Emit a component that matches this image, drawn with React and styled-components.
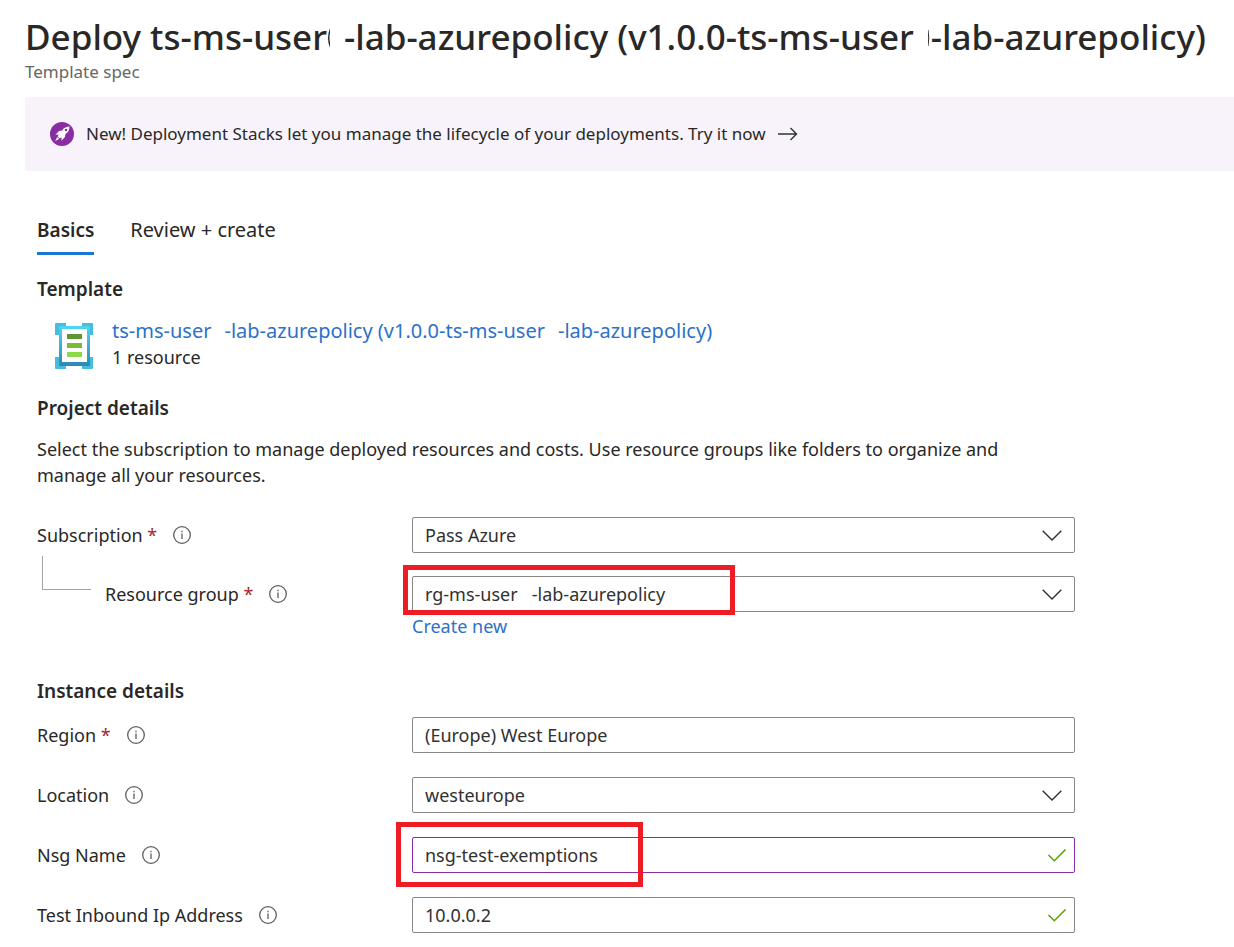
import React from 'react';
import styled, { createGlobalStyle, css } from 'styled-components';

const GlobalStyle = createGlobalStyle`
  *, *::before, *::after { box-sizing: border-box; }
  body {
    margin: 0;
    background: #fff;
    color: #292827;
    font: 400 18px/26px "Noto Sans", "Open Sans", sans-serif;
  }
`;

const Page = styled.div`
  padding: 12px 0 14px 25px;
`;

const Title = styled.h1`
  margin: 0;
  font-size: 35px;
  line-height: 50px;
  font-weight: 500;
  white-space: nowrap;
`;

const Subtitle = styled.p`
  margin: 0;
  font-size: 17px;
  line-height: 20px;
  color: #666;
`;

const Gap = styled.span`
  display: inline-block;
  width: ${(p) => p.$width}px;
`;

const Sliver = styled.svg`
  width: 3px;
  height: 24px;
`;

const Banner = styled.a`
  display: flex;
  align-items: center;
  gap: 12px;
  height: 74px;
  margin-top: 15px;
  padding: 0 25px;
  border-radius: 3px 0 0 3px;
  background: #f8f3fb;
  color: inherit;
  font-size: 17px;
  text-decoration: none;
`;

const Icon = styled.svg`
  display: block;
  flex: none;
  width: ${(p) => p.$w}px;
  height: ${(p) => p.$h || p.$w}px;
`;

const Content = styled.main`
  width: 87%;
  padding: 46px 0 0 12px;
`;

const Tabs = styled.div`
  display: flex;
  gap: 36px;
`;

const Tab = styled.button`
  height: 38px;
  padding: 0 0 9px;
  border: 0;
  border-bottom: 3px solid ${(p) => (p.$active ? '#1976d2' : 'transparent')};
  background: none;
  color: inherit;
  font: inherit;
  font-size: ${(p) => (p.$active ? 19 : 20)}px;
  font-weight: ${(p) => (p.$active ? 600 : 400)};
`;

const Heading = styled.h2`
  margin: 0;
  font-size: 19px;
  line-height: 26px;
  font-weight: 600;
`;

const TemplateRow = styled.div`
  display: flex;
  gap: 19px;
  margin-top: 16px;
  padding-left: 18px;
  white-space: nowrap;
`;

const TemplateIcon = styled(Icon)`
  margin-top: 5px;
`;

const Link = styled.a`
  color: #2b72c9;
  text-decoration: none;
`;

const TemplateLink = styled(Link)`
  font-size: 20px;
`;

const CreateLink = styled(Link)`
  display: block;
  width: max-content;
  padding-top: 1px;
`;

const Section = styled.section`
  margin-top: ${(p) => p.$top}px;
`;

const Description = styled.p`
  margin: 15px 0 0;
`;

const Fields = styled.div`
  display: flex;
  flex-direction: column;
  gap: ${(p) => p.$gap}px;
  margin-top: ${(p) => p.$top}px;
`;

const Row = styled.div`
  display: grid;
  grid-template-columns: 375px minmax(0, 663px);
`;

const LabelCell = styled.div`
  position: relative;
  display: flex;
  align-items: center;
  gap: 16px;
  height: 36px;
  padding-left: ${(p) => (p.$nested ? 68 : 0)}px;
`;

const Branch = styled.span`
  position: absolute;
  left: 5px;
  top: -20px;
  width: 49px;
  height: 34px;
  border: solid #a3a3a3;
  border-width: 0 0 1px 1px;
`;

const Star = styled.span`
  color: #a4262c;
`;

const InfoButton = styled.button`
  padding: 0;
  border: 0;
  background: none;
`;

const Control = styled.div`
  position: relative;
`;

const box = css`
  display: block;
  width: 100%;
  height: 36px;
  padding: 0 48px 0 12px;
  border: 1px solid ${(p) => (p.$edited ? '#8a2da5' : '#8a8886')};
  border-radius: 2px;
  background: #fff;
  color: #323130;
  font: inherit;
  line-height: 34px;
  outline: 0;
  appearance: none;
`;

const Input = styled.input`${box}`;
const Select = styled.select`${box}`;

const Adornment = styled.span`
  position: absolute;
  top: 8px;
  right: ${(p) => (p.$valid ? 8 : 13)}px;
  pointer-events: none;
`;

const Marker = styled.span`
  position: absolute;
  top: ${(p) => p.$top}px;
  left: ${(p) => p.$left}px;
  width: ${(p) => p.$width}px;
  height: ${(p) => p.$height}px;
  border: 5px solid #ee1c25;
  pointer-events: none;
`;

const InfoIcon = () => (
  <Icon $w={18} viewBox="0 0 18 18" fill="none" stroke="#605e5c" aria-hidden="true">
    <circle cx="9" cy="9" r="8.3" strokeWidth="1.3" />
    <path d="M9 7.5v5.5M9 4.8v1.4" strokeWidth="1.3" />
  </Icon>
);

const Chevron = () => (
  <Icon $w={20} viewBox="0 0 20 20" fill="none" stroke="#323130" strokeWidth="1.4" aria-hidden="true">
    <path d="M.7 5.7 10 15l9.3-9.3" />
  </Icon>
);

const Check = () => (
  <Icon $w={20} viewBox="0 0 20 20" fill="none" stroke="#57a300" strokeWidth="1.5" aria-hidden="true">
    <path d="m1.5 10 5.8 5.8L18.5 4.5" />
  </Icon>
);

function Field({ id, label, value, required, nested, select, valid, edited, marker, children }) {
  return (
    <Row>
      <LabelCell $nested={nested}>
        {nested && <Branch />}
        <label htmlFor={id}>
          {label}
          {required && <Star> *</Star>}
        </label>
        <InfoButton type="button" aria-label={`About ${label}`}>
          <InfoIcon />
        </InfoButton>
      </LabelCell>
      <Control>
        {select ? (
          <Select id={id} defaultValue={value}>
            <option>{value}</option>
          </Select>
        ) : (
          <Input id={id} defaultValue={value} $edited={edited} />
        )}
        {(select || valid) && (
          <Adornment $valid={valid}>{select ? <Chevron /> : <Check />}</Adornment>
        )}
        {children}
        {marker && <Marker {...marker} />}
      </Control>
    </Row>
  );
}

export default function App() {
  return (
    <>
      <GlobalStyle />
      <Page>
        <header>
          <Title>
            Deploy ts-ms-user
            <Sliver viewBox="0 0 3 24" aria-hidden="true">
              <path d="M3.5 3Q0 12 3.5 21" fill="none" stroke="#292827" strokeWidth="1.5" />
            </Sliver>
            <Gap $width={14} />
            -lab-azurepolicy (v1.0.0-ts-ms-user
            <Gap $width={14} />
            <Sliver viewBox="0 0 3 24" aria-hidden="true">
              <path d="M0 4Q1.5 12 0 20" fill="none" stroke="#292827" strokeWidth="1" />
            </Sliver>
            -lab-azurepolicy)
          </Title>
          <Subtitle>Template spec</Subtitle>
        </header>

        <Banner href="#stacks">
          <Icon $w={24} viewBox="0 0 24 24" aria-hidden="true">
            <circle cx="12" cy="12" r="12" fill="#8a2da5" />
            <path
              d="M19.5 4.5c-3.2 0-5.4 1-7.3 4l-3.2.5-3.6 3.8 3.2-.4-.8 2.2 1.7 1.7 2.2-.8-.4 3.3 3.5-3.5.7-3.3c3-2 4-4.2 4-7.5z"
              fill="#fff"
            />
            <circle cx="16" cy="8" r="1.3" fill="#8a2da5" />
            <path d="m7.2 15-2 4 4-2z" fill="#fff" />
          </Icon>
          <span>New! Deployment Stacks let you manage the lifecycle of your deployments. Try it now</span>
          <Icon $w={20} viewBox="0 0 20 20" fill="none" stroke="#323130" strokeWidth="1.4" aria-hidden="true">
            <path d="M0 10h18.5M12.5 4l6 6-6 6" />
          </Icon>
        </Banner>

        <Content>
          <Tabs role="tablist">
            <Tab role="tab" aria-selected="true" $active>Basics</Tab>
            <Tab role="tab" aria-selected="false">Review + create</Tab>
          </Tabs>

          <Section $top={21}>
            <Heading>Template</Heading>
            <TemplateRow>
              <TemplateIcon $w={38} $h={46} viewBox="0 0 38 46" aria-hidden="true">
                <defs>
                  <linearGradient id="frame" x1="0" y1="0" x2="0" y2="1">
                    <stop offset="0" stopColor="#50d5f5" />
                    <stop offset="1" stopColor="#2f87b3" />
                  </linearGradient>
                </defs>
                <path
                  d="M1 0h10v12H0V1q0-1 1-1zM27 0h10q1 0 1 1v11H27zM0 34h11v12H1q-1 0-1-1zM27 34h11v11q0 1-1 1H27z"
                  fill="#45bddd"
                />
                <rect x="4" y="3" width="31" height="40" rx="1" fill="url(#frame)" />
                <rect x="7" y="6" width="25" height="33" fill="#fff" />
                <path d="M12 11h15v5H12z" fill="#5e9631" />
                <path d="M12 20h15v5H12z" fill="#7abb3a" />
                <path d="M12 29h15v5H12z" fill="#8cd94a" />
              </TemplateIcon>
              <div>
                <TemplateLink href="#template">
                  ts-ms-user
                  <Gap $width={13} />
                  -lab-azurepolicy (v1.0.0-ts-ms-user
                  <Gap $width={13} />
                  -lab-azurepolicy)
                </TemplateLink>
                <div>1 resource</div>
              </div>
            </TemplateRow>
          </Section>

          <Section $top={25}>
            <Heading>Project details</Heading>
            <Description>
              Select the subscription to manage deployed resources and costs. Use resource groups like folders to organize and
              <br />
              manage all your resources.
            </Description>
            <Fields $top={29} $gap={23}>
              <Field id="subscription" label="Subscription" value="Pass Azure" required select />
              <Field
                id="resource-group"
                label="Resource group"
                value={'rg-ms-user\u00a0\u00a0\u00a0-lab-azurepolicy'}
                required
                nested
                select
                marker={{ $top: -11, $left: -9, $width: 332, $height: 50 }}
              >
                <CreateLink href="#create">Create new</CreateLink>
              </Field>
            </Fields>
          </Section>

          <Section $top={39}>
            <Heading>Instance details</Heading>
            <Fields $top={13} $gap={24}>
              <Field id="region" label="Region" value="(Europe) West Europe" required />
              <Field id="location" label="Location" value="westeurope" select />
              <Field
                id="nsg"
                label="Nsg Name"
                value="nsg-test-exemptions"
                valid
                edited
                marker={{ $top: -15, $left: -16, $width: 247, $height: 65 }}
              />
              <Field id="ip" label="Test Inbound Ip Address" value="10.0.0.2" valid />
            </Fields>
          </Section>
        </Content>
      </Page>
    </>
  );
}
